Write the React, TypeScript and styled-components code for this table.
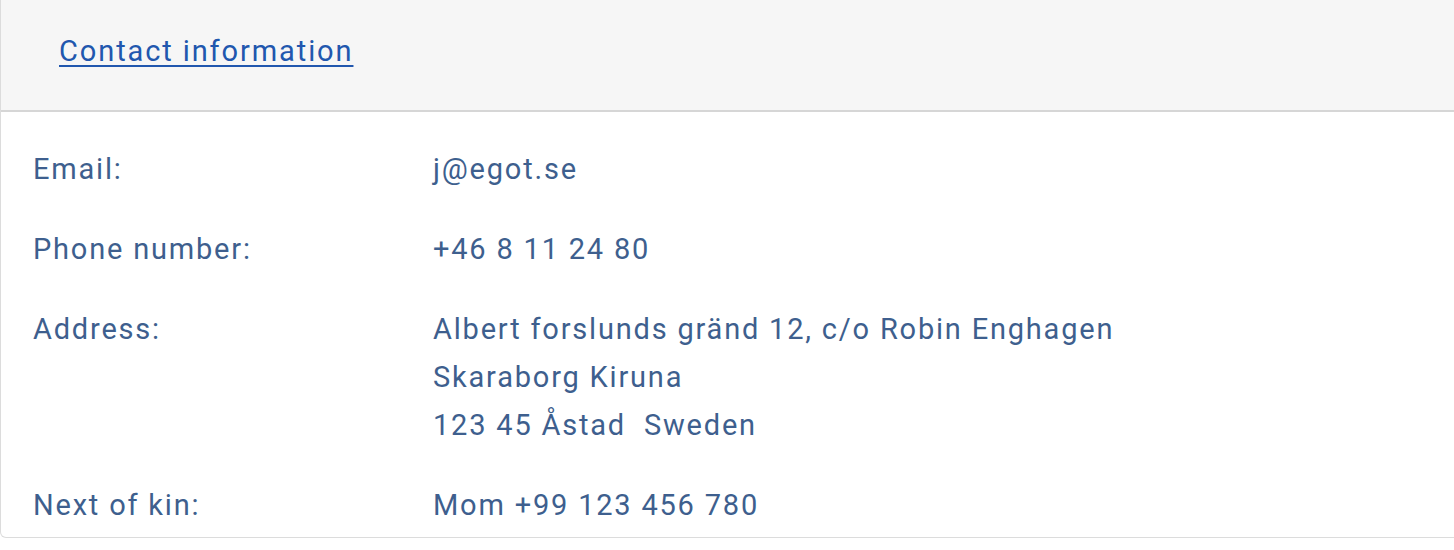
import React from "react";
import styled, { createGlobalStyle } from "styled-components";

const GlobalStyle = createGlobalStyle`
  html, body {
    margin: 0;
    padding: 0;
    background: #ffffff;
    overflow: hidden;
  }
  body {
    font-family: Roboto, "Noto Sans", Arial, sans-serif;
  }
`;

const Card = styled.section`
  width: calc(100% + 8px);
  box-sizing: border-box;
  border: 1px solid #dcdcdc;
  border-top: none;
  border-radius: 0 0 6px 6px;
  background: #ffffff;
  overflow: hidden;
`;

const Header = styled.header`
  height: 112px;
  box-sizing: border-box;
  display: flex;
  align-items: center;
  padding: 0 0 8px 58px;
  background: #f6f6f6;
  border-bottom: 2px solid #d6d6d6;
`;

const HeaderLink = styled.a`
  font-size: 29px;
  color: #2157ae;
  text-decoration: underline;
  text-decoration-thickness: 2px;
  text-underline-offset: 4px;
  letter-spacing: 1.9px;
  cursor: pointer;
`;

const Body = styled.dl`
  margin: 0;
  padding: 33px 0 8px 32px;
  display: flex;
  flex-direction: column;
  gap: 32px;
`;

const Row = styled.div`
  display: grid;
  grid-template-columns: 400px 1fr;
  font-size: 29px;
  line-height: 48px;
  color: #3e5f8e;
  letter-spacing: 1.8px;
`;

const Label = styled.dt`
  margin: 0;
`;

const Value = styled.dd`
  margin: 0;
  white-space: pre;
`;

const rows: { label: string; lines: string[] }[] = [
  { label: "Email:", lines: ["j@egot.se"] },
  { label: "Phone number:", lines: ["+46 8 11 24 80"] },
  {
    label: "Address:",
    lines: [
      "Albert forslunds gränd 12, c/o Robin Enghagen",
      "Skaraborg Kiruna",
      "123 45 Åstad  Sweden",
    ],
  },
  { label: "Next of kin:", lines: ["Mom +99 123 456 780"] },
];

export default function App() {
  return (
    <>
      <GlobalStyle />
      <Card>
        <Header>
          <HeaderLink>Contact information</HeaderLink>
        </Header>
        <Body>
          {rows.map((r) => (
            <Row key={r.label}>
              <Label>{r.label}</Label>
              <Value>{r.lines.join("\n")}</Value>
            </Row>
          ))}
        </Body>
      </Card>
    </>
  );
}
